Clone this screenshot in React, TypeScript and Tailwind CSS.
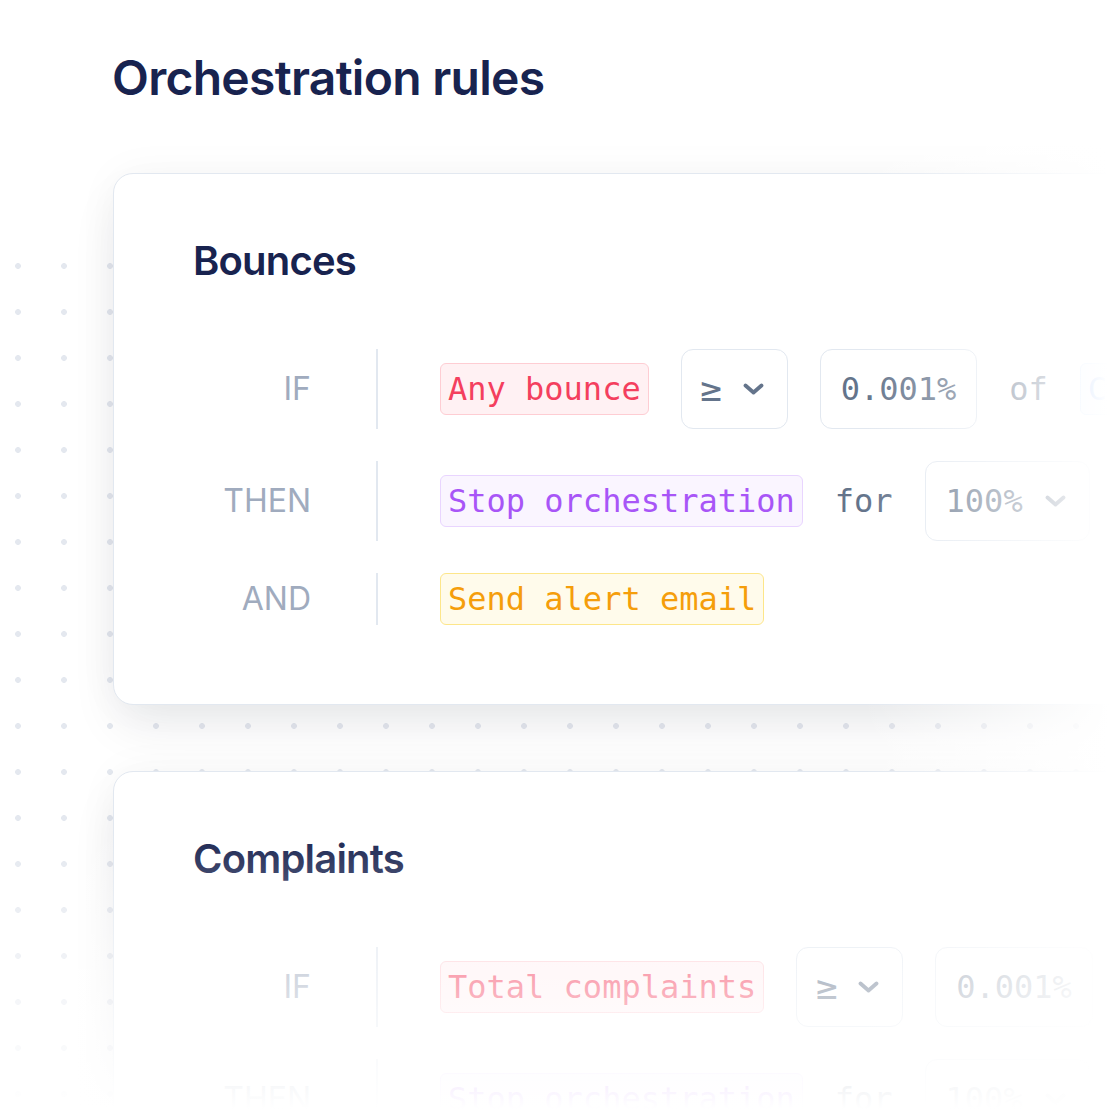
import type { ReactNode } from 'react';

const sans = "font-['Inter',sans-serif]";
const mono = "font-['DejaVu_Sans_Mono',monospace]";

type Tone = 'rose' | 'violet' | 'amber' | 'blue';

const TONES: Record<Tone, string> = {
  rose: 'bg-[#fff1f3] border-[#fecdd3] text-[#f43f5e]',
  violet: 'bg-[#faf5ff] border-[#e9d5ff] text-[#a855f7]',
  amber: 'bg-[#fffbeb] border-[#fde68a] text-[#f59e0b]',
  blue: 'bg-[#eff6ff] border-[#bfdbfe] text-[#3b82f6]',
};

function Chevron() {
  return (
    <svg width="21" height="12" viewBox="0 0 21 12" fill="none" className="shrink-0">
      <path d="M2.5 2.5 L10.5 9.5 L18.5 2.5" stroke="currentColor" strokeWidth="3.8" strokeLinecap="round" strokeLinejoin="round" />
    </svg>
  );
}

function Pill({ tone, children }: { tone: Tone; children: ReactNode }) {
  return (
    <span className={`${mono} ${TONES[tone]} shrink-0 whitespace-nowrap rounded-[6px] border px-[7px] py-[6px] text-[32px] leading-[38px]`}>
      {children}
    </span>
  );
}

function Select({ value, big }: { value: string; big?: boolean }) {
  return (
    <div className={`${mono} flex h-[80px] shrink-0 items-center gap-[22px] rounded-[12px] border border-[#e2e8f0] pl-[20px] pr-[23px] text-[32px] text-[#64748b]`}>
      <span className={big ? 'flex w-[19px] justify-center text-[36px] leading-none' : 'whitespace-nowrap'}>{value}</span>
      <Chevron />
    </div>
  );
}

function Field({ value }: { value: string }) {
  return (
    <div className={`${mono} flex h-[80px] shrink-0 items-center rounded-[12px] border border-[#e2e8f0] px-[20px] text-[32px] text-[#64748b]`}>
      {value}
    </div>
  );
}

function Word({ children }: { children: ReactNode }) {
  return <span className={`${mono} shrink-0 text-[32px] text-[#64748b]`}>{children}</span>;
}

function Row({ label, children }: { label: string; children: ReactNode }) {
  return (
    <div className="flex items-stretch">
      <div className={`${sans} flex w-[118px] shrink-0 items-center justify-end text-[32px] text-[#a0abbe]`}>{label}</div>
      <div className="ml-[65px] w-[2px] shrink-0 bg-[#e2e8f0]" />
      <div className="ml-[62px] flex items-center gap-8">{children}</div>
    </div>
  );
}

function RuleCard({ title, children }: { title: string; children: ReactNode }) {
  return (
    <section className="w-[1100px] shrink-0 rounded-[20px] border border-[#e2e8f0] bg-white pb-[79px] pl-[79px] pt-[63px] shadow-[0_24px_50px_-6px_rgba(15,23,42,0.09),0_0_44px_rgba(15,23,42,0.04)]">
      <h2 className={`${sans} mb-[64px] text-[40px] font-semibold leading-[48px] tracking-[-0.02em] text-[#18234f]`}>{title}</h2>
      <div className="flex flex-col gap-8">{children}</div>
    </section>
  );
}

export default function App() {
  return (
    <div className="relative h-[1120px] w-[1120px] overflow-hidden bg-white">
      {/* dotted backdrop */}
      <div className="absolute inset-x-0 bottom-0 top-[243px] bg-[radial-gradient(circle,#e4e8ef_2.7px,transparent_3.1px)] bg-[length:46px_46px] bg-[position:-5px_0px]" />

      <div className="relative flex flex-col pl-[112px] pt-[50px]">
        <h1 className={`${sans} mb-[67px] text-[48px] font-semibold leading-[56px] tracking-[-0.015em] text-[#18234f]`}>
          Orchestration rules
        </h1>

        <div className="ml-px flex flex-col gap-[66px]">
          <RuleCard title="Bounces">
            <Row label="IF">
              <Pill tone="rose">Any bounce</Pill>
              <Select value="≥" big />
              <Field value="0.001%" />
              <Word>of</Word>
              <Pill tone="blue">Customers</Pill>
            </Row>
            <Row label="THEN">
              <Pill tone="violet">Stop orchestration</Pill>
              <Word>for</Word>
              <Select value="100%" />
            </Row>
            <Row label="AND">
              <Pill tone="amber">Send alert email</Pill>
            </Row>
          </RuleCard>

          <RuleCard title="Complaints">
            <Row label="IF">
              <Pill tone="rose">Total complaints</Pill>
              <Select value="≥" big />
              <Field value="0.001%" />
              <Word>of</Word>
            </Row>
            <Row label="THEN">
              <Pill tone="violet">Stop orchestration</Pill>
              <Word>for</Word>
              <Select value="100%" />
            </Row>
            <Row label="AND">
              <Pill tone="amber">Send alert email</Pill>
            </Row>
          </RuleCard>
        </div>
      </div>

      {/* fade-outs to the right and bottom */}
      <div className="pointer-events-none absolute inset-0 bg-[linear-gradient(to_right,rgba(255,255,255,0)_77%,#fff_99%)]" />
      <div className="pointer-events-none absolute inset-0 bg-[linear-gradient(to_bottom,rgba(255,255,255,0)_74%,#fff_99%)]" />
    </div>
  );
}
